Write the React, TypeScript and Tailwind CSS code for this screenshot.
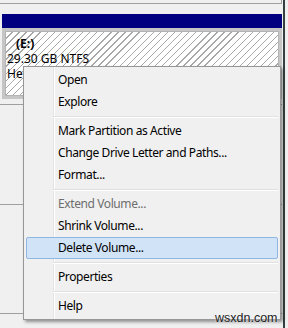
import React from "react";

type Item = { label: string; disabled?: boolean; active?: boolean } | "sep";

const items: Item[] = [
  { label: "Open" },
  { label: "Explore" },
  "sep",
  { label: "Mark Partition as Active" },
  { label: "Change Drive Letter and Paths..." },
  { label: "Format..." },
  "sep",
  { label: "Extend Volume...", disabled: true },
  { label: "Shrink Volume..." },
  { label: "Delete Volume...", active: true },
  "sep",
  { label: "Properties" },
  "sep",
  { label: "Help" },
];

export default function App() {
  return (
    <div
      className="relative w-[288px] h-[328px] overflow-hidden bg-[#f0f0f0] text-black"
      style={{ fontFamily: '"Noto Sans", "Open Sans", sans-serif' }}
    >
      {/* right window edge */}
      <div className="absolute right-[3px] top-0 h-full w-[2px] bg-[#34403f]" />

      {/* previous disk row (bottom edge) */}
      <div className="w-[282px] h-[4px] border-b border-r border-[#a0a0a0]" />

      {/* disk row */}
      <div className="mt-[10px] w-[282px] h-[91px] border-b border-[#a0a0a0]">
        <div className="ml-[2px] w-[280px]">
          <div className="h-[14px] bg-[#000080]" />
          <div className="h-[71px] bg-[#c6c6c6] p-[3px]">
            <div className="h-full border border-[#b4b4b4] bg-[repeating-linear-gradient(135deg,#ffffff_0px,#ffffff_4px,#a8a8a8_4px,#a8a8a8_5px)] pl-[1px] pt-[4px] text-[12px] leading-[15px]">
              <div className="pl-[9px] font-bold">(E:)</div>
              <div>29.30 GB NTFS</div>
              <div>Healthy (Primary Partition)</div>
            </div>
          </div>
        </div>
      </div>

      {/* other rows */}
      <div className="mt-[99px] h-px w-[282px] bg-[#a0a0a0]" />
      <div className="mt-[108px] h-px w-[282px] bg-[#a0a0a0]" />

      {/* context menu */}
      <div className="absolute left-[23px] top-[66px] w-[258px] h-[254px] border border-[#979797] bg-[#f0f0f0] p-[2px] shadow-[2px_2px_3px_rgba(0,0,0,0.4)]">
        <div className="absolute left-[29px] top-0 bottom-0 flex">
          <div className="h-full w-px bg-[#e2e3e3]" />
          <div className="h-full w-px bg-white" />
        </div>
        <div className="relative flex flex-col text-[12px] tracking-[-0.4px]">
          {items.map((it, i) =>
            it === "sep" ? (
              <div key={i} className="h-[7px] pl-[27px] pt-[3px]">
                <div className="h-px bg-[#e0e0e0]" />
                <div className="h-px bg-white" />
              </div>
            ) : (
              <div
                key={i}
                className={
                  it.active
                    ? "flex h-[22px] items-center rounded-[2px] border border-[#90b6e2] bg-[#d1e3f6] pl-[31px]"
                    : "flex h-[22px] items-center border border-transparent pl-[31px]"
                }
              >
                <span className={it.disabled ? "text-[#6d6d6d]" : "text-black"}>
                  {it.label}
                </span>
              </div>
            )
          )}
        </div>
      </div>

      {/* watermark */}
      <div
        className="absolute left-[215px] top-[310px] text-[12.5px] leading-[16px] text-[#222]"
        style={{ fontFamily: '"Liberation Sans", Arial, sans-serif', textShadow: "0 0 2px #fff" }}
      >
        wsxdn.com
      </div>
    </div>
  );
}
